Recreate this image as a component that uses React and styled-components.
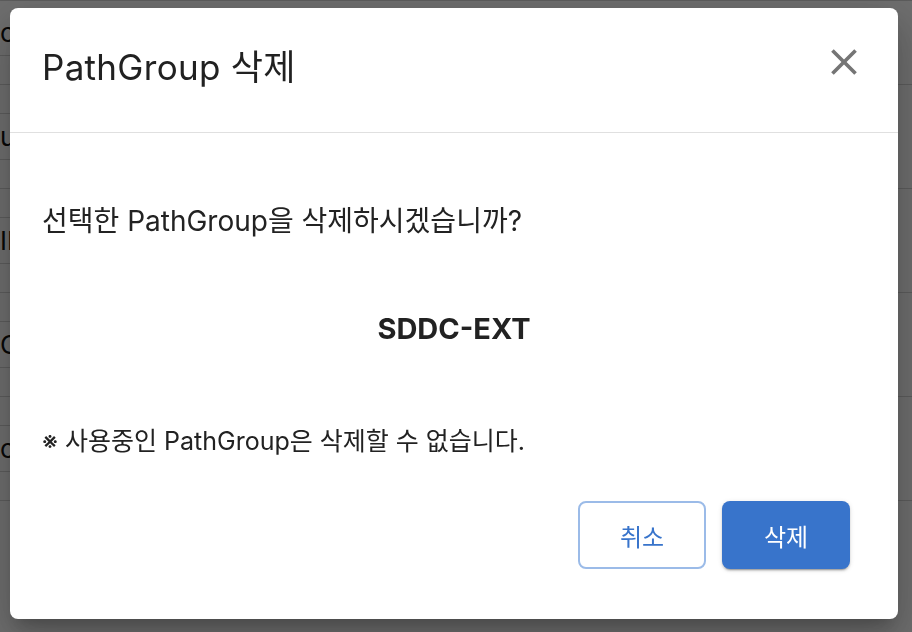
import React from "react";
import styled, { createGlobalStyle } from "styled-components";
import { MdClose } from "react-icons/md";

const GlobalStyle = createGlobalStyle`
  html, body {
    margin: 0;
    height: 100%;
  }
  body {
    font-family: "Inter", "Noto Sans CJK KR", sans-serif;
    background: #fff;
    color: #222;
    overflow: hidden;
  }
`;

const groups = ["cl", "u", "IF", "Co", "cl"];

function BackgroundTable() {
  return (
    <Table>
      {groups.map((label, i) => (
        <Group key={i}>
          <Row $height={46}>
            <LeftCell>{label}</LeftCell>
            <RightCell />
          </Row>
          <Row $height={29}>
            <LeftCell />
            <RightCell $line />
          </Row>
          <Row $height={29}>
            <LeftCell $hidden={i === groups.length - 1} />
            <RightCell />
          </Row>
        </Group>
      ))}
    </Table>
  );
}

function DeleteDialog({ name }) {
  return (
    <Backdrop>
      <Dialog>
        <Header>
          <Title>PathGroup 삭제</Title>
          <CloseButton aria-label="close">
            <MdClose size={44} />
          </CloseButton>
        </Header>
        <Body>
          <Question>선택한 PathGroup을 삭제하시겠습니까?</Question>
          <Name>{name}</Name>
          <Note>※ 사용중인 PathGroup은 삭제할 수 없습니다.</Note>
          <Actions>
            <Button>취소</Button>
            <Button $primary>삭제</Button>
          </Actions>
        </Body>
      </Dialog>
    </Backdrop>
  );
}

export default function App() {
  return (
    <>
      <GlobalStyle />
      <BackgroundTable />
      <DeleteDialog name="SDDC-EXT" />
    </>
  );
}

const Table = styled.div`
  padding-top: 9px;
  border-top: 1px solid #d5d5d5;
`;

const Group = styled.div`
  display: flex;
  flex-direction: column;
`;

const Row = styled.div`
  display: flex;
  height: ${(p) => p.$height}px;
  box-sizing: border-box;
`;

const LeftCell = styled.div`
  width: 50%;
  border-bottom: 1px solid ${(p) => (p.$hidden ? "transparent" : "#d5d5d5")};
  font-size: 26px;
  line-height: 46px;
  color: #111;
  white-space: nowrap;
  overflow: hidden;
`;

const RightCell = styled.div`
  flex: 1;
  border-bottom: 1px solid ${(p) => (p.$line ? "#d5d5d5" : "transparent")};
`;

const Backdrop = styled.div`
  position: fixed;
  inset: 0;
  background: rgba(0, 0, 0, 0.57);
  display: flex;
  align-items: flex-start;
  padding: 8px 0 0 10px;
  box-sizing: border-box;
`;

const Dialog = styled.div`
  width: 888px;
  background: #fff;
  border-radius: 8px;
  display: flex;
  flex-direction: column;
  box-shadow: 0px 11px 15px -7px rgba(0, 0, 0, 0.2),
    0px 24px 38px 3px rgba(0, 0, 0, 0.14), 0px 9px 46px 8px rgba(0, 0, 0, 0.12);
`;

const Header = styled.div`
  display: flex;
  justify-content: space-between;
  align-items: flex-start;
  height: 125px;
  box-sizing: border-box;
  padding: 39px 32px 0;
  border-bottom: 1px solid #e0e0e0;
`;

const Title = styled.h2`
  margin: 0;
  font-size: 35px;
  line-height: 40px;
  font-weight: 400;
  letter-spacing: 0.3px;
  color: #212121;
`;

const CloseButton = styled.button`
  width: 44px;
  height: 44px;
  margin-top: -7px;
  padding: 0;
  border: none;
  background: transparent;
  color: #757575;
  display: flex;
  align-items: center;
  justify-content: center;
  cursor: pointer;
`;

const Body = styled.div`
  display: flex;
  flex-direction: column;
  padding: 70px 32px 50px;
`;

const Question = styled.p`
  margin: 0;
  font-size: 28px;
  line-height: 36px;
  color: #222;
`;

const Name = styled.div`
  margin-top: 72px;
  text-align: center;
  font-size: 29px;
  line-height: 36px;
  font-weight: 700;
  color: #222;
`;

const Note = styled.p`
  margin: 77px 0 0;
  font-size: 25px;
  line-height: 34px;
  color: #222;
`;

const Actions = styled.div`
  margin-top: 43px;
  padding-right: 16px;
  display: flex;
  justify-content: flex-end;
  gap: 16px;
`;

const Button = styled.button`
  width: 128px;
  height: 68px;
  box-sizing: border-box;
  border-radius: 8px;
  font-family: "Noto Sans CJK KR", sans-serif;
  font-size: 24px;
  font-weight: 400;
  cursor: pointer;
  border: ${(p) => (p.$primary ? "none" : "2px solid #9bbbe8")};
  background: ${(p) => (p.$primary ? "#3874cb" : "#fff")};
  color: ${(p) => (p.$primary ? "#fff" : "#3874cb")};
  box-shadow: ${(p) =>
    p.$primary
      ? "0px 3px 1px -2px rgba(0,0,0,0.2), 0px 2px 2px 0px rgba(0,0,0,0.14), 0px 1px 5px 0px rgba(0,0,0,0.12)"
      : "none"};
`;
